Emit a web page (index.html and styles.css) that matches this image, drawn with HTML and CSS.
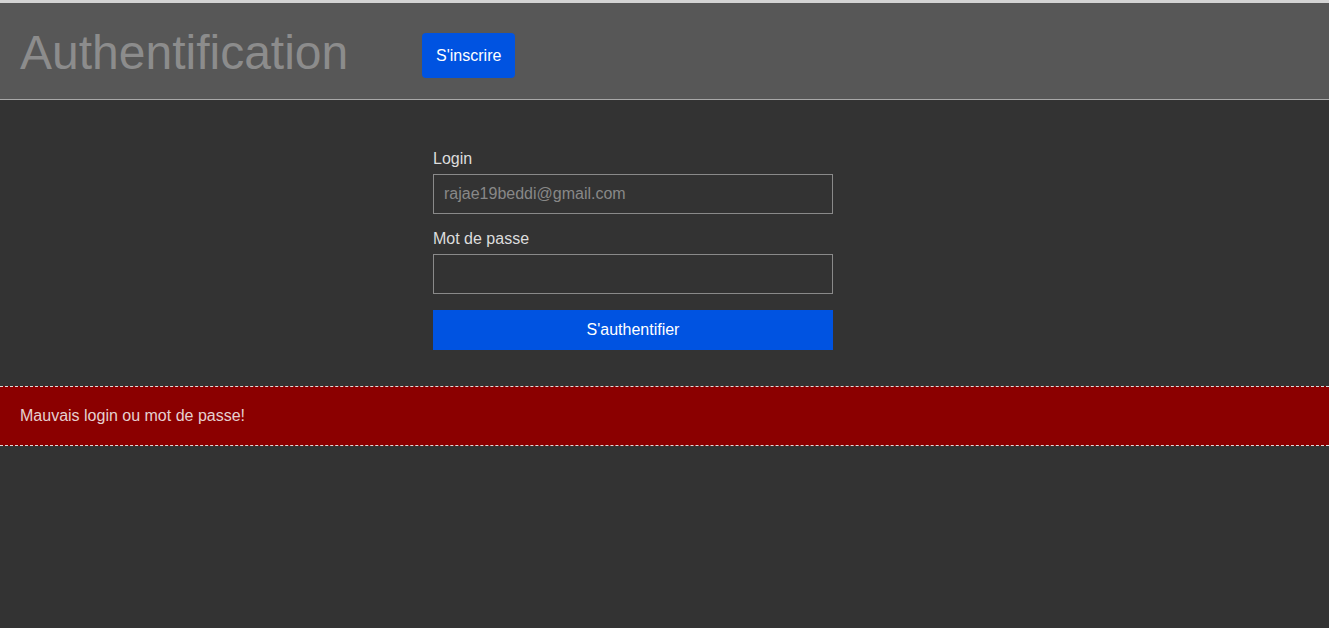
FILE: index.html
```html
<!DOCTYPE html>
<html lang="fr">
<head>
<meta charset="utf-8">
<title>Authentification</title>
<link rel="stylesheet" href="styles.css">
</head>
<body>
<header class="topbar">
  <h1 class="title">Authentification</h1>
  <button class="btn-register" type="button">S'inscrire</button>
</header>
<main class="content">
  <form class="login-form">
    <label class="field-label" for="login">Login</label>
    <input class="field-input" id="login" type="text" placeholder="rajae19beddi@gmail.com">
    <label class="field-label" for="pwd">Mot de passe</label>
    <input class="field-input" id="pwd" type="password">
    <button class="btn-submit" type="button">S'authentifier</button>
  </form>
</main>
<div class="error-bar">Mauvais login ou mot de passe!</div>
</body>
</html>
```
FILE: styles.css
```css
* { box-sizing: border-box; }
html, body {
  margin: 0;
  padding: 0;
  background: #333333;
  font-family: "Liberation Sans", Arial, sans-serif;
  font-size: 16px;
}
.topbar {
  display: flex;
  align-items: flex-start;
  height: 100px;
  padding-left: 20px;
  background: #575757;
  border-top: 3px solid #d4d4d4;
  border-bottom: 1px solid #a8a8a8;
}
.title {
  margin: 22px 0 0 0;
  font-size: 48px;
  font-weight: normal;
  line-height: 55px;
  color: #8c8c8c;
}
.btn-register {
  margin: 30px 0 0 74px;
  height: 45px;
  width: 93px;
  padding: 0;
  border: none;
  border-radius: 4px;
  background: #0053e1;
  color: #ffffff;
  font-family: inherit;
  font-size: 16px;
}
.content {
  padding: 50px 0 36px 433px;
}
.login-form {
  display: flex;
  flex-direction: column;
  width: 400px;
}
.field-label {
  display: block;
  color: #dddddd;
  line-height: 18px;
  margin-bottom: 6px;
}
.field-input {
  height: 40px;
  width: 400px;
  padding: 0 10px;
  border: 1px solid #8a8a8a;
  background: #333333;
  color: #dddddd;
  font-family: inherit;
  font-size: 16px;
  outline: none;
  margin-bottom: 16px;
}
.field-input::placeholder {
  color: #888888;
}
.btn-submit {
  height: 40px;
  width: 400px;
  border: none;
  background: #0053e1;
  color: #ffffff;
  font-family: inherit;
  font-size: 16px;
}
.error-bar {
  display: flex;
  align-items: center;
  height: 60px;
  padding-left: 20px;
  background: #8b0000;
  border-top: 1px dashed #dcdcdc;
  border-bottom: 1px dashed #dcdcdc;
  color: #e6d0d0;
}
```
